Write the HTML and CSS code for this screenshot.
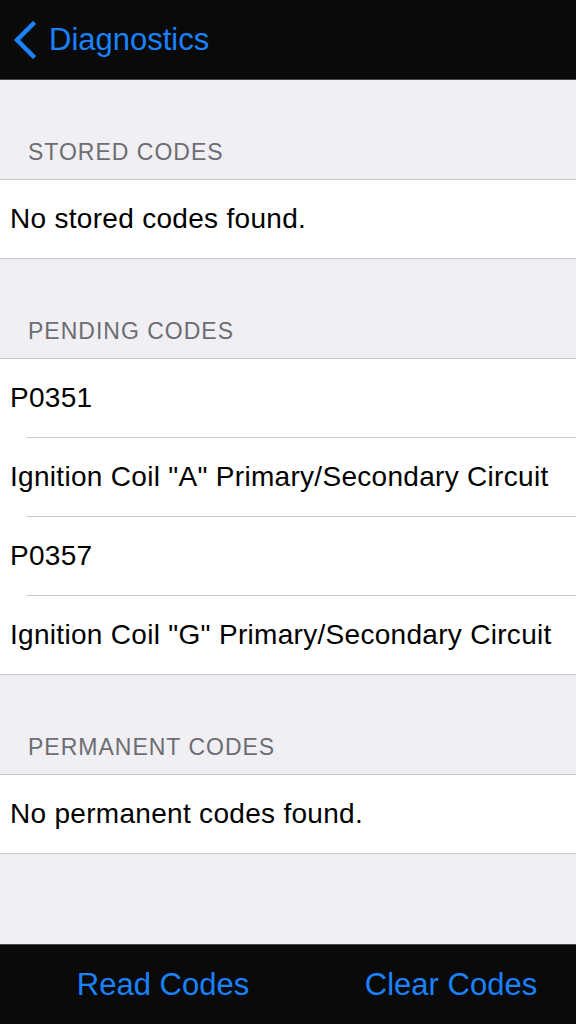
FILE: index.html
```html
<!DOCTYPE html>
<html lang="en">
<head>
    <meta charset="UTF-8">
    <meta name="viewport" content="width=device-width, initial-scale=1.0">
    <title>Trouble Codes</title>
    <link rel="stylesheet" href="styles.css">
</head>
<body>

    <div class="nav-bar">
        <a class="back-link" href="#">
            <svg class="chevron" width="26" height="38" viewBox="0 0 26 38">
                <path d="M21 3 L5 19 L21 35" fill="none" stroke="#1a82fb" stroke-width="4.5" stroke-linecap="square" stroke-linejoin="miter"/>
            </svg>
            <span>Diagnostics</span>
        </a>
    </div>

    <div class="content">
        <div class="section-header">STORED CODES</div>
        <div class="group">
            <div class="cell">No stored codes found.</div>
        </div>

        <div class="section-header">PENDING CODES</div>
        <div class="group">
            <div class="cell">P0351</div>
            <div class="cell">Ignition Coil "A" Primary/Secondary Circuit</div>
            <div class="cell">P0357</div>
            <div class="cell">Ignition Coil "G" Primary/Secondary Circuit</div>
        </div>

        <div class="section-header">PERMANENT CODES</div>
        <div class="group">
            <div class="cell">No permanent codes found.</div>
        </div>
    </div>

    <div class="tool-bar">
        <a href="#">Read Codes</a>
        <a href="#">Clear Codes</a>
    </div>

</body>
</html>
```

FILE: styles.css
```css
body {
    margin: 0;
    height: 100vh;
    display: flex;
    flex-direction: column;
    background-color: #efeff4;
    font-family: "Liberation Sans", Arial, sans-serif;
    overflow: hidden;
}

a {
    text-decoration: none;
    color: #1a82fb;
}

.nav-bar {
    height: 79px;
    flex-shrink: 0;
    background-color: #0a0a0a;
    border-bottom: 1px solid #4a4a4a;
    display: flex;
    align-items: center;
}

.back-link {
    display: flex;
    align-items: center;
    margin-left: 12px;
    font-size: 31px;
}

.chevron {
    margin-right: 11px;
    margin-top: 1px;
}

.content {
    flex: 1;
}

.section-header {
    height: 99px;
    box-sizing: border-box;
    padding: 0 0 13px 28px;
    display: flex;
    align-items: flex-end;
    color: #6d6d72;
    font-size: 23px;
    letter-spacing: 1px;
}

.group {
    background-color: white;
    border-top: 1px solid #c8c7cc;
    border-bottom: 1px solid #c8c7cc;
}

.cell {
    height: 78px;
    display: flex;
    align-items: center;
    padding-left: 10px;
    font-size: 28px;
    letter-spacing: 0.3px;
    color: black;
    position: relative;
}

/* séparateur décalé entre les lignes */
.cell + .cell {
    margin-top: 1px;
}

.cell + .cell::before {
    content: "";
    position: absolute;
    top: -1px;
    left: 27px;
    right: 0;
    height: 1px;
    background-color: #c8c7cc;
}

.tool-bar {
    height: 79px;
    flex-shrink: 0;
    background-color: #0a0a0a;
    border-top: 1px solid #4a4a4a;
    display: flex;
    align-items: center;
    font-size: 31px;
}

.tool-bar a {
    width: 50%;
    box-sizing: border-box;
    padding-left: 38px;
    text-align: center;
}
```
